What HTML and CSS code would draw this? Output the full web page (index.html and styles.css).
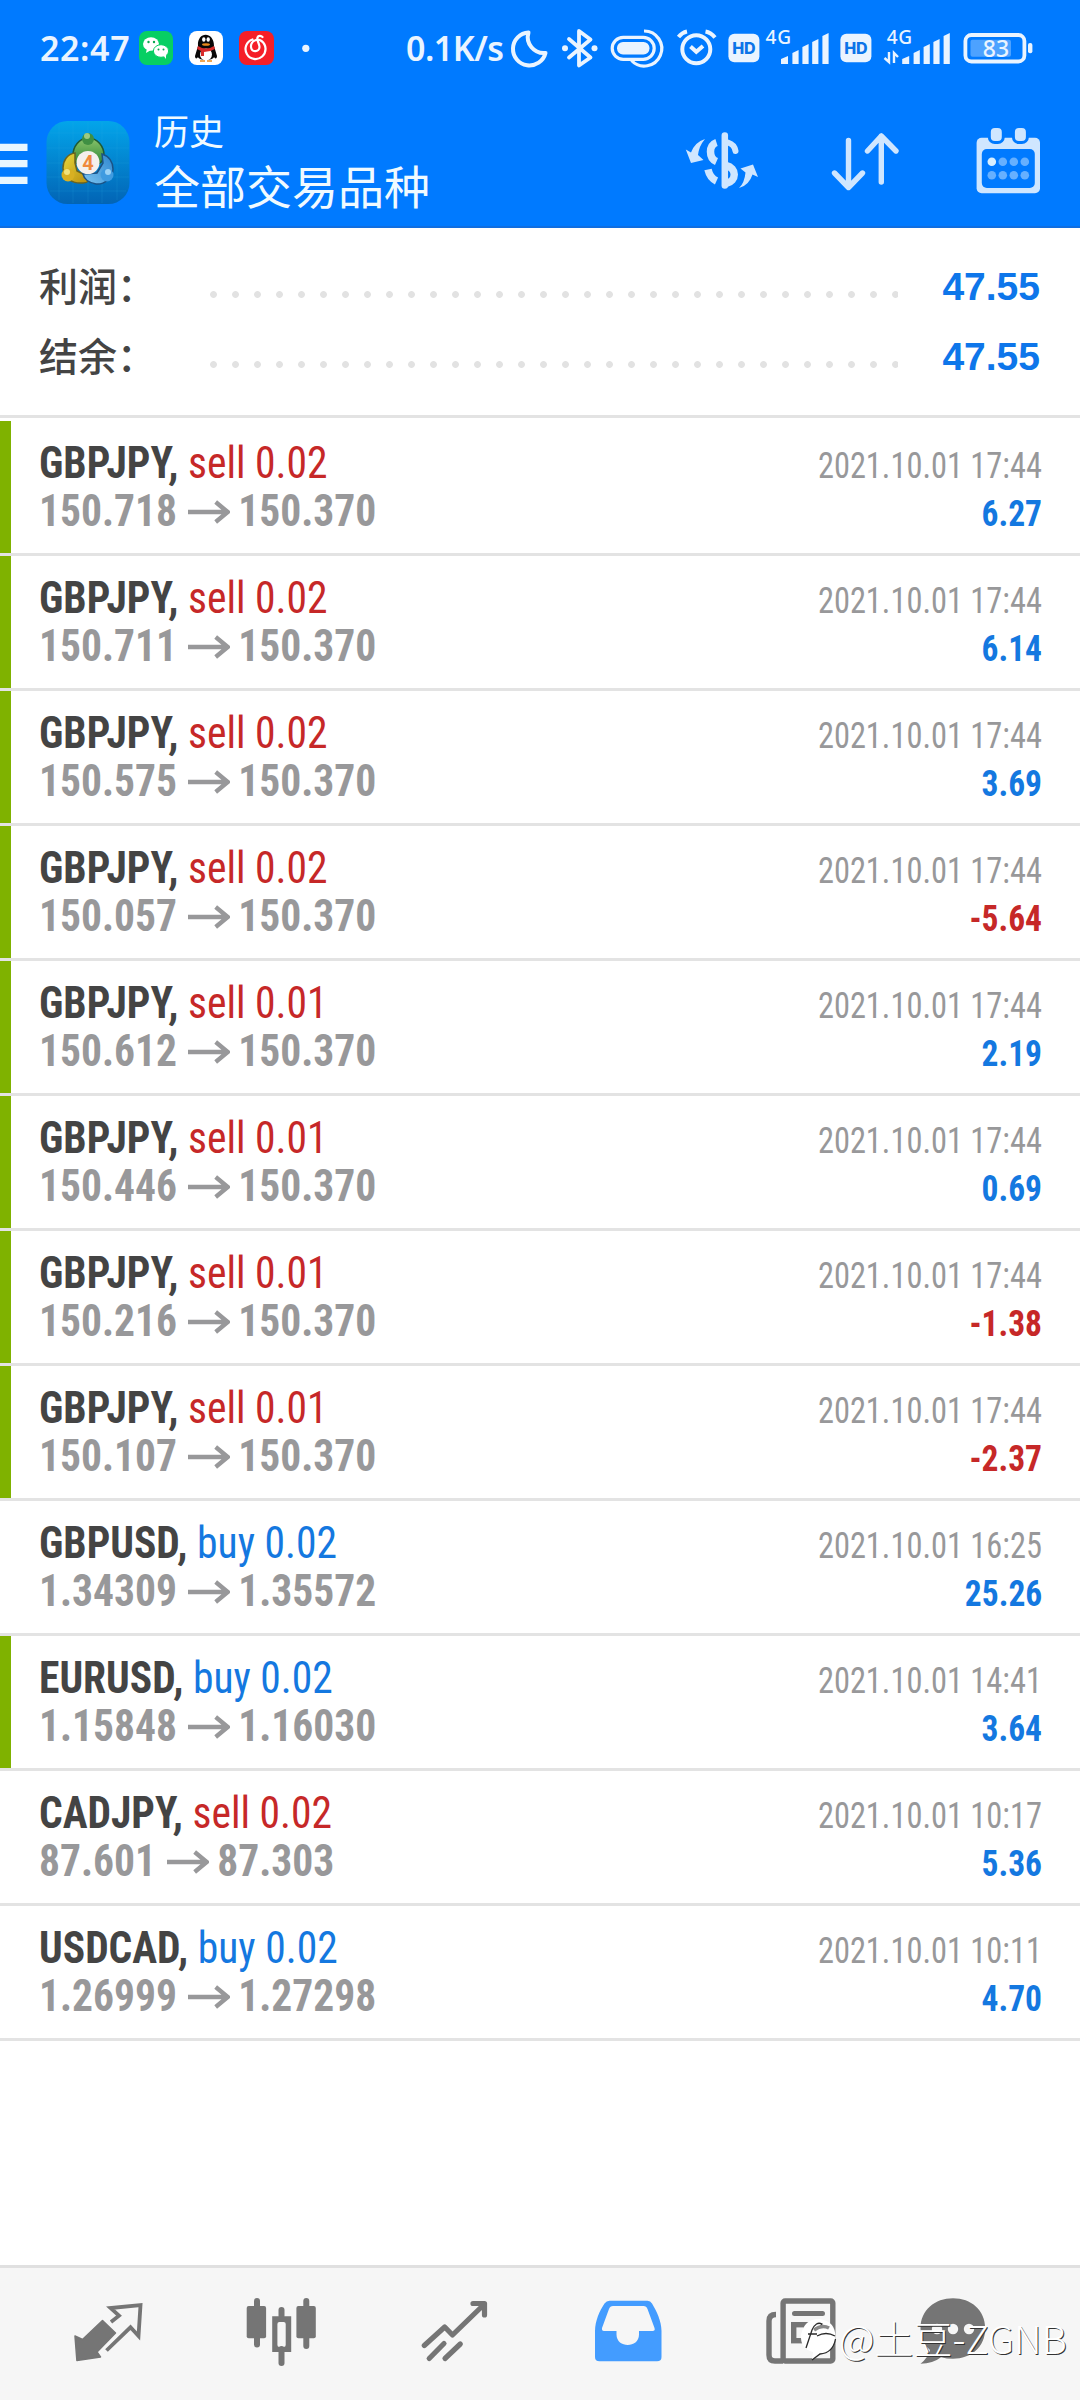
FILE: index.html
```
<!DOCTYPE html>
<html lang="zh-CN">
<head>
<meta charset="utf-8">
<title>历史</title>
<link rel="stylesheet" href="styles.css">
</head>
<body>
<svg class="defs" width="0" height="0">
  <symbol id="arrow" viewBox="0 0 44 24"><path d="M0 12H41M29 2L41.500 12L29 22" fill="none" stroke="currentColor" stroke-width="4.600"/></symbol>
</svg>
<div class="screen">
  <header class="top">
    <div class="status">
      <span class="status-text clock">22:47</span>
      <svg width="180" height="44" viewBox="134 26 180 44">
        <rect x="139" y="31" width="34" height="34" rx="8" fill="#07cf63"/>
        <ellipse cx="151" cy="44" rx="8" ry="6.700" fill="#fff"/><path d="M147 48l-1 5 5-3z" fill="#fff"/>
        <ellipse cx="161" cy="51" rx="7.600" ry="6.300" fill="#fff" stroke="#07cf63"/><path d="M163 55l3 4 0-6z" fill="#fff"/>
        <g fill="#07a850"><circle cx="148.500" cy="42" r="1.200"/><circle cx="154" cy="42" r="1.200"/><circle cx="158.500" cy="49.500" r="1"/><circle cx="163.500" cy="49.500" r="1"/></g>
        <rect x="189" y="31" width="34" height="34" rx="8" fill="#fff"/>
        <path d="M198 46c-1-15 16-15 16 0l3 10c0 3-2 3-3 1-1 4-15 4-16 0-1 2-3 2-3-1z" fill="#080808"/>
        <ellipse cx="206" cy="54.500" rx="6" ry="6" fill="#fff"/>
        <path d="M198 46q8 5 16 0l1 3q-5 3-11 3v4h-3v-5l-4-2z" fill="#d82b2b"/>
        <ellipse cx="203.800" cy="39.500" rx="1.700" ry="2.300" fill="#fff"/><ellipse cx="208.200" cy="39.500" rx="1.700" ry="2.300" fill="#fff"/>
        <ellipse cx="206" cy="44.500" rx="4" ry="1.300" fill="#e98a1c"/>
        <path d="M200 61h5M207 61h5" stroke="#e98a1c" stroke-width="1.500"/>
        <rect x="239" y="31" width="35" height="34" rx="8" fill="#f51f28"/>
        <path d="M252.500 39.500a10 10 0 1 0 9 1.500c-4-3-11 0-10.500 6 .5 6 8.500 5 8.500 0 0-3-3-7-2-9.500s4-1.500 5-.5" fill="none" stroke="#fff" stroke-width="2.200" stroke-linecap="round"/>
        <circle cx="305.800" cy="48.300" r="3.600" fill="#eaf4ff"/>
      </svg>
      <span class="status-text speed">0.1K/s</span>
      <svg width="45" height="44" viewBox="508 26 45 44"><path d="M528.500 32.500A16.500 16.500 0 1 0 545.500 53A16 16 0 0 1 528.500 32.500Z" fill="none" stroke="#eaf4ff" stroke-width="4" stroke-linejoin="round"/></svg>
      <svg width="51" height="44" viewBox="553 26 51 44"><path d="M569 39L590.500 57.500L579 65.500V31L590.500 39.500L569 57.500" fill="none" stroke="#eaf4ff" stroke-width="3.800" stroke-linejoin="round" stroke-linecap="round"/><circle cx="565" cy="48.300" r="3" fill="#eaf4ff"/><circle cx="594.500" cy="48.300" r="3" fill="#eaf4ff"/></svg>
      <svg width="66" height="44" viewBox="604 26 66 44"><rect x="612.200" y="37.300" width="42" height="22" rx="11" fill="none" stroke="#eaf4ff" stroke-width="3.200"/><rect x="617" y="42" width="32.500" height="12.500" rx="6" fill="#eaf4ff"/><path d="M644 31A17.500 17.500 0 1 1 631.500 60.500" fill="none" stroke="#eaf4ff" stroke-width="3.200"/></svg>
      <svg width="52" height="44" viewBox="670 26 52 44"><g fill="none" stroke="#eaf4ff" stroke-width="4"><circle cx="696.300" cy="49.300" r="14"/><path d="M690.500 46.500L696.300 51.800L703 46M678.500 37Q682 32.500 687 31.500M705.500 31.500Q711 32.500 715 37.500"/></g></svg>
      <svg width="40" height="44" viewBox="722 26 40 44"><rect x="728.400" y="33.700" width="31" height="28.600" rx="6" fill="#eaf4ff"/><text x="743.900" y="53.800" class="hd">HD</text></svg>
      <svg width="72" height="48" viewBox="762 22 72 48" class="tall"><text x="765.500" y="43.700" class="net">4G</text><path d="M781 64V59L788 56V64ZM792.400 64V53L798.600 50V64ZM802.400 64V47L808.600 44V64ZM812.200 64V42L818.400 39V64ZM822.400 64V36L828.600 33V64Z" fill="#eaf4ff"/></svg>
      <svg width="43" height="44" viewBox="834 26 43 44"><rect x="840.400" y="33.700" width="31" height="28.600" rx="6" fill="#eaf4ff"/><text x="855.900" y="53.800" class="hd">HD</text></svg>
      <svg width="80" height="48" viewBox="877 22 80 48" class="tall"><text x="886.700" y="43.700" class="net">4G</text><path d="M902.200 64V59L909.200 56V64ZM913.600 64V53L919.800 50V64ZM923.600 64V47L929.800 44V64ZM933.400 64V42L939.600 39V64ZM943.600 64V36L949.800 33V64Z" fill="#eaf4ff"/><path d="M889 52V62L884.500 58M894 63V53L898 57" fill="none" stroke="#eaf4ff" stroke-width="2.400"/></svg>
      <svg width="83" height="44" viewBox="957 26 83 44"><rect x="965.400" y="35" width="59" height="26.500" rx="6" fill="none" stroke="#eaf4ff" stroke-width="3.800"/><rect x="970.500" y="39.700" width="40.500" height="17" rx="2" fill="#4da2ff"/><rect x="1028" y="43" width="4.400" height="10.300" rx="2" fill="#eaf4ff"/><text x="996" y="56.600" class="bat">83</text></svg>
    </div>
    <div class="appbar">
      <svg class="menu" width="46" height="62" viewBox="0 133 46 62"><path d="M0 147.400H27.500M0 163.700H27.500M0 180.400H27.500" stroke="#e8f6ff" stroke-width="7.300"/></svg>
      <svg class="logo" width="84" height="83" viewBox="0 0 84 83">
        <defs>
          <linearGradient id="bg" x1="0" y1="0" x2="0" y2="1"><stop offset="0" stop-color="#03a5ea"/><stop offset="1" stop-color="#0264b5"/></linearGradient>
          <linearGradient id="gr" x1="0" y1="0" x2="0" y2="1"><stop offset="0" stop-color="#8ac46b"/><stop offset="1" stop-color="#2f8737"/></linearGradient>
          <linearGradient id="ye" x1="0" y1="0" x2="1" y2="1"><stop offset="0" stop-color="#e7d83c"/><stop offset="1" stop-color="#b98c0c"/></linearGradient>
          <linearGradient id="bl" x1="1" y1="0" x2="0" y2="1"><stop offset="0" stop-color="#2d86cf"/><stop offset="1" stop-color="#7cc4f0"/></linearGradient>
        </defs>
        <rect x="0.500" y="0" width="83" height="83" rx="21" fill="url(#bg)"/>
        <path d="M13 4V79M27 1V82M42 1V82M56 1V82M71 4V79M4 12H80M1 27H83M1 42H83M1 56H83M4 70H80" stroke="#39b3e8" stroke-opacity=".16"/>
        <path d="M42 17c10 0 16 9 16 17 0 6-4 9-7 9L42 33l-9 10c-4-1-6-4-6-9 0-8 6-17 15-17z" fill="url(#gr)" stroke="#1f5a35" stroke-width="1.500"/>
        <path d="M29 32c-8 1-12 8-12 15 0 9 8 16 20 15 5 0 7-3 6-6l-12-6-2-8z" fill="url(#ye)" stroke="#6b641f" stroke-width="1.500"/>
        <path d="M56 33c7 2 11 8 11 15 0 9-9 16-17 15-7-1-12-5-13-10l14-1 6-10z" fill="url(#bl)" stroke="#1b5285" stroke-width="1.500"/>
        <circle cx="42" cy="18" r="6" fill="#3f8f43"/><circle cx="41" cy="15" r="3" fill="#9cca82"/>
        <circle cx="22" cy="54" r="6.500" fill="#d8b022"/><circle cx="21" cy="51" r="3" fill="#f2e27a"/>
        <circle cx="61" cy="54" r="6.500" fill="#3f9be0"/><circle cx="62" cy="51" r="3" fill="#9ad2f6"/>
        <circle cx="42" cy="41.500" r="11.500" fill="#f5f0ec"/>
        <text x="42" y="48.500" class="four">4</text>
      </svg>
      <div class="titles"><div class="sub">历史</div><div class="title">全部交易品种</div></div>
      <svg width="96" height="72" viewBox="675 124 96 72">
        <g fill="none" stroke="#cfe6ff" stroke-width="7.500"><path d="M724.800 135.500V185.500" stroke-width="6.500" stroke-linecap="round"/><path d="M716.500 142.500C708.500 145 708.500 158 716.500 161.500"/><path d="M728 142.500Q734.500 144.500 735.500 151" stroke-linecap="round" stroke-width="6"/><path d="M726 165.500C737 168 737 181 726 183.500"/><path d="M708 169.500Q710 178 716.500 181"/></g>
        <path d="M705 139Q699 146 698 155L703.500 160L691 163L685.800 149.500L691 152.500Q695 142 705 139ZM739 188Q744.500 183 745.500 172.500L740.500 168.500L753 164.500L758 177L752.500 174.500Q749 185.500 739 188Z" fill="#cfe6ff"/>
      </svg>
      <svg width="96" height="72" viewBox="820 124 96 72"><path d="M848.500 140.500V187M834.500 173L848.500 187.500L862.500 173M881.300 182V136M867.500 151L881.300 136L896 151" fill="none" stroke="#cfe6ff" stroke-width="5.400" stroke-linecap="round" stroke-linejoin="round"/></svg>
      <svg width="70" height="72" viewBox="972 124 70 72">
        <rect x="976.600" y="137.700" width="63.400" height="55.600" rx="5" fill="#cfe6ff"/><rect x="981.800" y="149" width="53" height="39" rx="5" fill="#007aff"/>
        <rect x="989.300" y="126.500" width="14" height="16" rx="5.500" fill="#cfe6ff" stroke="#007aff" stroke-width="3"/><rect x="1013.400" y="126.500" width="14" height="16" rx="5.500" fill="#cfe6ff" stroke="#007aff" stroke-width="3"/>
        <g fill="#66b0ff"><circle cx="991.800" cy="161.700" r="4.300" fill="#d8efff"/><circle cx="1002.800" cy="161.700" r="4.300"/><circle cx="1013.800" cy="161.700" r="4.300"/><circle cx="1024.800" cy="161.700" r="4.300"/><circle cx="991.800" cy="175.300" r="4.300"/><circle cx="1002.800" cy="175.300" r="4.300"/><circle cx="1013.800" cy="175.300" r="4.300"/><circle cx="1024.800" cy="175.300" r="4.300"/></g>
      </svg>
    </div>
  </header>

  <section class="summary">
    <div class="sum"><span class="label">利润：</span><span class="dots"></span><span class="value">47.55</span></div>
    <div class="sum"><span class="label">结余：</span><span class="dots"></span><span class="value">47.55</span></div>
  </section>

  <main class="list">
    <div class="row mark"><div class="line"><span class="pair"><b>GBPJPY,</b> <span class="sell">sell 0.02</span></span><span class="date">2021.10.01 17:44</span></div><div class="line"><span class="price">150.718<svg class="arr"><use href="#arrow"/></svg>150.370</span><span class="profit">6.27</span></div></div>
    <div class="row mark"><div class="line"><span class="pair"><b>GBPJPY,</b> <span class="sell">sell 0.02</span></span><span class="date">2021.10.01 17:44</span></div><div class="line"><span class="price">150.711<svg class="arr"><use href="#arrow"/></svg>150.370</span><span class="profit">6.14</span></div></div>
    <div class="row mark"><div class="line"><span class="pair"><b>GBPJPY,</b> <span class="sell">sell 0.02</span></span><span class="date">2021.10.01 17:44</span></div><div class="line"><span class="price">150.575<svg class="arr"><use href="#arrow"/></svg>150.370</span><span class="profit">3.69</span></div></div>
    <div class="row mark"><div class="line"><span class="pair"><b>GBPJPY,</b> <span class="sell">sell 0.02</span></span><span class="date">2021.10.01 17:44</span></div><div class="line"><span class="price">150.057<svg class="arr"><use href="#arrow"/></svg>150.370</span><span class="profit loss">-5.64</span></div></div>
    <div class="row mark"><div class="line"><span class="pair"><b>GBPJPY,</b> <span class="sell">sell 0.01</span></span><span class="date">2021.10.01 17:44</span></div><div class="line"><span class="price">150.612<svg class="arr"><use href="#arrow"/></svg>150.370</span><span class="profit">2.19</span></div></div>
    <div class="row mark"><div class="line"><span class="pair"><b>GBPJPY,</b> <span class="sell">sell 0.01</span></span><span class="date">2021.10.01 17:44</span></div><div class="line"><span class="price">150.446<svg class="arr"><use href="#arrow"/></svg>150.370</span><span class="profit">0.69</span></div></div>
    <div class="row mark"><div class="line"><span class="pair"><b>GBPJPY,</b> <span class="sell">sell 0.01</span></span><span class="date">2021.10.01 17:44</span></div><div class="line"><span class="price">150.216<svg class="arr"><use href="#arrow"/></svg>150.370</span><span class="profit loss">-1.38</span></div></div>
    <div class="row mark"><div class="line"><span class="pair"><b>GBPJPY,</b> <span class="sell">sell 0.01</span></span><span class="date">2021.10.01 17:44</span></div><div class="line"><span class="price">150.107<svg class="arr"><use href="#arrow"/></svg>150.370</span><span class="profit loss">-2.37</span></div></div>
    <div class="row"><div class="line"><span class="pair"><b>GBPUSD,</b> <span class="buy">buy 0.02</span></span><span class="date">2021.10.01 16:25</span></div><div class="line"><span class="price">1.34309<svg class="arr"><use href="#arrow"/></svg>1.35572</span><span class="profit">25.26</span></div></div>
    <div class="row mark"><div class="line"><span class="pair"><b>EURUSD,</b> <span class="buy">buy 0.02</span></span><span class="date">2021.10.01 14:41</span></div><div class="line"><span class="price">1.15848<svg class="arr"><use href="#arrow"/></svg>1.16030</span><span class="profit">3.64</span></div></div>
    <div class="row"><div class="line"><span class="pair"><b>CADJPY,</b> <span class="sell">sell 0.02</span></span><span class="date">2021.10.01 10:17</span></div><div class="line"><span class="price">87.601<svg class="arr"><use href="#arrow"/></svg>87.303</span><span class="profit">5.36</span></div></div>
    <div class="row"><div class="line"><span class="pair"><b>USDCAD,</b> <span class="buy">buy 0.02</span></span><span class="date">2021.10.01 10:11</span></div><div class="line"><span class="price">1.26999<svg class="arr"><use href="#arrow"/></svg>1.27298</span><span class="profit">4.70</span></div></div>
  </main>

  <nav class="tabs">
    <svg width="80" height="80" viewBox="68.500 2292 80 80"><path d="M102 2320.500L115 2333L96.500 2352L100 2357L76.400 2360.500L74.500 2336L82 2339.500Z" fill="#757575" stroke="#757575" stroke-width="1.500" stroke-linejoin="round"/><path d="M110.500 2322L118.500 2315.700L110 2308L140 2305L138 2336L130 2327.300L106 2350.500" fill="none" stroke="#757575" stroke-width="3.800"/></svg>
    <svg width="80" height="80" viewBox="241.500 2292 80 80"><g fill="#757575"><rect x="246.200" y="2306" width="19.400" height="32.300" rx="2"/><rect x="295.900" y="2306" width="19.400" height="32.300" rx="2"/><rect x="253.500" y="2298" width="6" height="49.500" rx="3"/><rect x="302.800" y="2298" width="6" height="51" rx="3"/><rect x="278" y="2307" width="6" height="12" rx="3"/><rect x="278" y="2346" width="6" height="20" rx="3"/><path fill-rule="evenodd" d="M271.700 2316.300H290.700V2352H271.700ZM276.900 2324q0-2 2-2h4.300q2 0 2 2V2345q0 2-2 2h-4.300q-2 0-2-2Z"/></g></svg>
    <svg width="80" height="80" viewBox="414.500 2292 80 80"><path d="M423.800 2345.500L444.200 2327L452 2335L484 2304M472.500 2303.500H484V2315M443.500 2343.500L428.700 2358.500M459.800 2344L444.500 2358.500" fill="none" stroke="#757575" stroke-width="5.200" stroke-linecap="round" stroke-linejoin="round"/></svg>
    <svg width="80" height="80" viewBox="587.500 2292 80 80"><path fill-rule="evenodd" fill="#439cff" d="M609 2300.700H647Q650 2300.700 651.500 2303.500C656 2311 661 2321 661 2331V2357Q661 2361.300 656.500 2361.300H599Q594.500 2361.300 594.500 2357V2331C594.500 2321 599 2311 604 2303.500Q606 2300.700 609 2300.700ZM612.500 2306Q609.500 2306 608.500 2309L601.500 2328Q601 2331 603.500 2331H616V2334.500C616 2348.500 638.500 2348.500 638.500 2334.500V2331H652Q655 2331 654 2328L647 2309Q646 2306 643 2306Z"/></svg>
    <svg width="80" height="80" viewBox="761 2292 80 80"><g fill="none" stroke="#757575" stroke-width="5.400"><rect x="783.100" y="2301" width="49.700" height="60" rx="2"/><path d="M776 2314.500Q769 2314.500 769 2321V2355Q769 2361 775 2361H783"/><path d="M794.500 2313.500H822.500M815 2325H822.500M815 2340H822.500" stroke-linecap="round" stroke-width="5"/><rect x="793.700" y="2324.700" width="12.500" height="16"/></g></svg>
    <svg width="80" height="80" viewBox="913 2292 80 80"><path fill="#757575" d="M953 2298.300C971 2298.300 985.200 2310 985.200 2328.500S971 2358.700 953 2358.700Q947 2358.700 941 2357.200Q933 2363.500 920.500 2363.700Q928 2358 930 2350Q920.500 2342 920.500 2328.500C920.500 2310 935 2298.300 953 2298.300Z"/><g fill="#f6f6f6"><circle cx="937" cy="2329" r="5.200"/><circle cx="953" cy="2329" r="5.200"/><circle cx="969" cy="2329" r="5.200"/></g></svg>
  </nav>
  <div class="watermark">
    <svg width="38" height="46" viewBox="799 2320 38 46"><path d="M801 2338Q804 2322 819 2322Q836 2324 835.500 2341Q833 2356 820 2357L812 2363L813 2355Q800 2352 801 2338Z" fill="#fff"/><path d="M806 2351L812 2333Q816 2324 822 2327L820 2330M808 2337H817M817 2339Q826 2334 835 2339M835.500 2342Q833 2356 820 2357L812 2363" fill="none" stroke="#2a2a2a" stroke-width="1.300"/><path d="M814 2333Q822 2327 829 2331" fill="none" stroke="#8a8a8a" stroke-width="3.500"/></svg>
    <span>@土豆-ZGNB</span>
  </div>
</div>
</body>
</html>
```
FILE: styles.css
```
* { box-sizing: border-box; }
body { margin: 0; background: #fff; font-family: Roboto, "Noto Sans CJK SC", sans-serif; }
svg { display: block; flex: none; }
.defs { position: absolute; }
.screen { position: relative; width: 1080px; height: 2400px; display: flex; flex-direction: column; overflow: hidden; }

.top { height: 228px; background: #007aff; border-bottom: 2px solid #106ee0; flex: none; }
.status { display: flex; height: 108px; padding: 26px 40px 0 40px; }
.status-text { font: 600 34px/44px "Noto Sans", sans-serif; color: #eaf4ff; white-space: nowrap; }
.clock { width: 94px; letter-spacing: .6px; }
.speed { width: 102px; margin-left: 92px; letter-spacing: -.5px; }
.tall { margin-top: -4px; }
.hd { font: 800 16px Inter, sans-serif; fill: #0b74e8; text-anchor: middle; }
.net { font: 500 19px "Noto Sans", sans-serif; fill: #eaf4ff; letter-spacing: .8px; }
.bat { font: 500 23px "Noto Sans", sans-serif; fill: #eaf4ff; text-anchor: middle; }

.appbar { display: flex; height: 118px; align-items: center; padding-right: 38px; }
.appbar > svg:nth-last-child(3) { margin-left: auto; }
.appbar > svg:nth-last-child(2) { margin: 0 56px 0 49px; }
.appbar > svg:nth-last-child(-n+3) { margin-top: -14px; }
.menu { margin-top: -6px; }
.logo { margin-top: -10px; }
.four { font: 700 20px Roboto, sans-serif; fill: #f08a3c; text-anchor: middle; }
.titles { margin: -13px 0 0 24px; color: #f0faff; font-family: "Noto Sans CJK SC", sans-serif; }
.sub { font-size: 35px; line-height: 46px; }
.title { font-size: 46px; line-height: 62px; }

.summary { height: 190px; flex: none; padding: 22px 40px 0 39px; border-bottom: 3px solid #e3e3e3; }
.sum { display: flex; align-items: center; height: 70px; }
.label { width: 171px; font: 500 39px/68px "Noto Sans CJK SC", sans-serif; color: #444; margin-top: -3px; }
.dots { width: 688px; height: 7px; margin-top: 18px; background: radial-gradient(circle at 3.500px 3.500px, #e2e2e2 3px, transparent 3.800px) 0 0 / 22px 7px; }
.value { margin-left: auto; padding-top: 4px; font: 700 39px/60px "Liberation Sans", sans-serif; color: #0e76ea; }

.list { padding-top: 3px; }
.row { position: relative; height: 135px; padding: 19px 38px 0 39px; border-bottom: 3px solid #e3e3e3; font-family: "Roboto Condensed", Roboto, sans-serif; font-stretch: 75%; }
.mark { border-left: 11px solid #7fb200; padding-left: 28px; border-bottom: 0; }
.mark::after { content: ""; position: absolute; left: -11px; right: 0; bottom: 0; height: 3px; background: #e3e3e3; }
.line { display: flex; justify-content: space-between; align-items: baseline; height: 48px; line-height: 48px; white-space: nowrap; }
.pair { font-size: 43.500px; color: #444; transform: scaleX(.955); transform-origin: left; }
.price { display: flex; align-items: center; font-size: 43.500px; font-weight: 700; color: #98989a; transform: scaleX(.955); transform-origin: left; }
.arr { width: 44px; height: 24px; margin: 0 9px 0 11px; }
.sell { color: #c62828; }
.buy { color: #1478e0; }
.date { font-size: 36px; color: #98989a; transform: scaleX(.9); transform-origin: right; }
.profit { font-size: 36px; font-weight: 700; color: #1478e0; transform: scaleX(.93); transform-origin: right; }
.loss { color: #c62828; }

.tabs { position: relative; margin-top: auto; height: 135px; flex: none; display: flex; gap: 93px; padding: 24px 0 0 68.500px; background: #f6f6f6; border-top: 3px solid #e0e0e0; }
.tabs > svg:last-child { margin-left: -21px; }
.watermark { position: absolute; left: 799px; top: 2317px; display: flex; align-items: center; gap: 2px; font: 300 39px/44px "Noto Sans CJK SC", sans-serif; color: #fff; text-shadow: 1px 1px 0 #333; white-space: nowrap; }
.watermark span { margin-top: -6px; }
```
